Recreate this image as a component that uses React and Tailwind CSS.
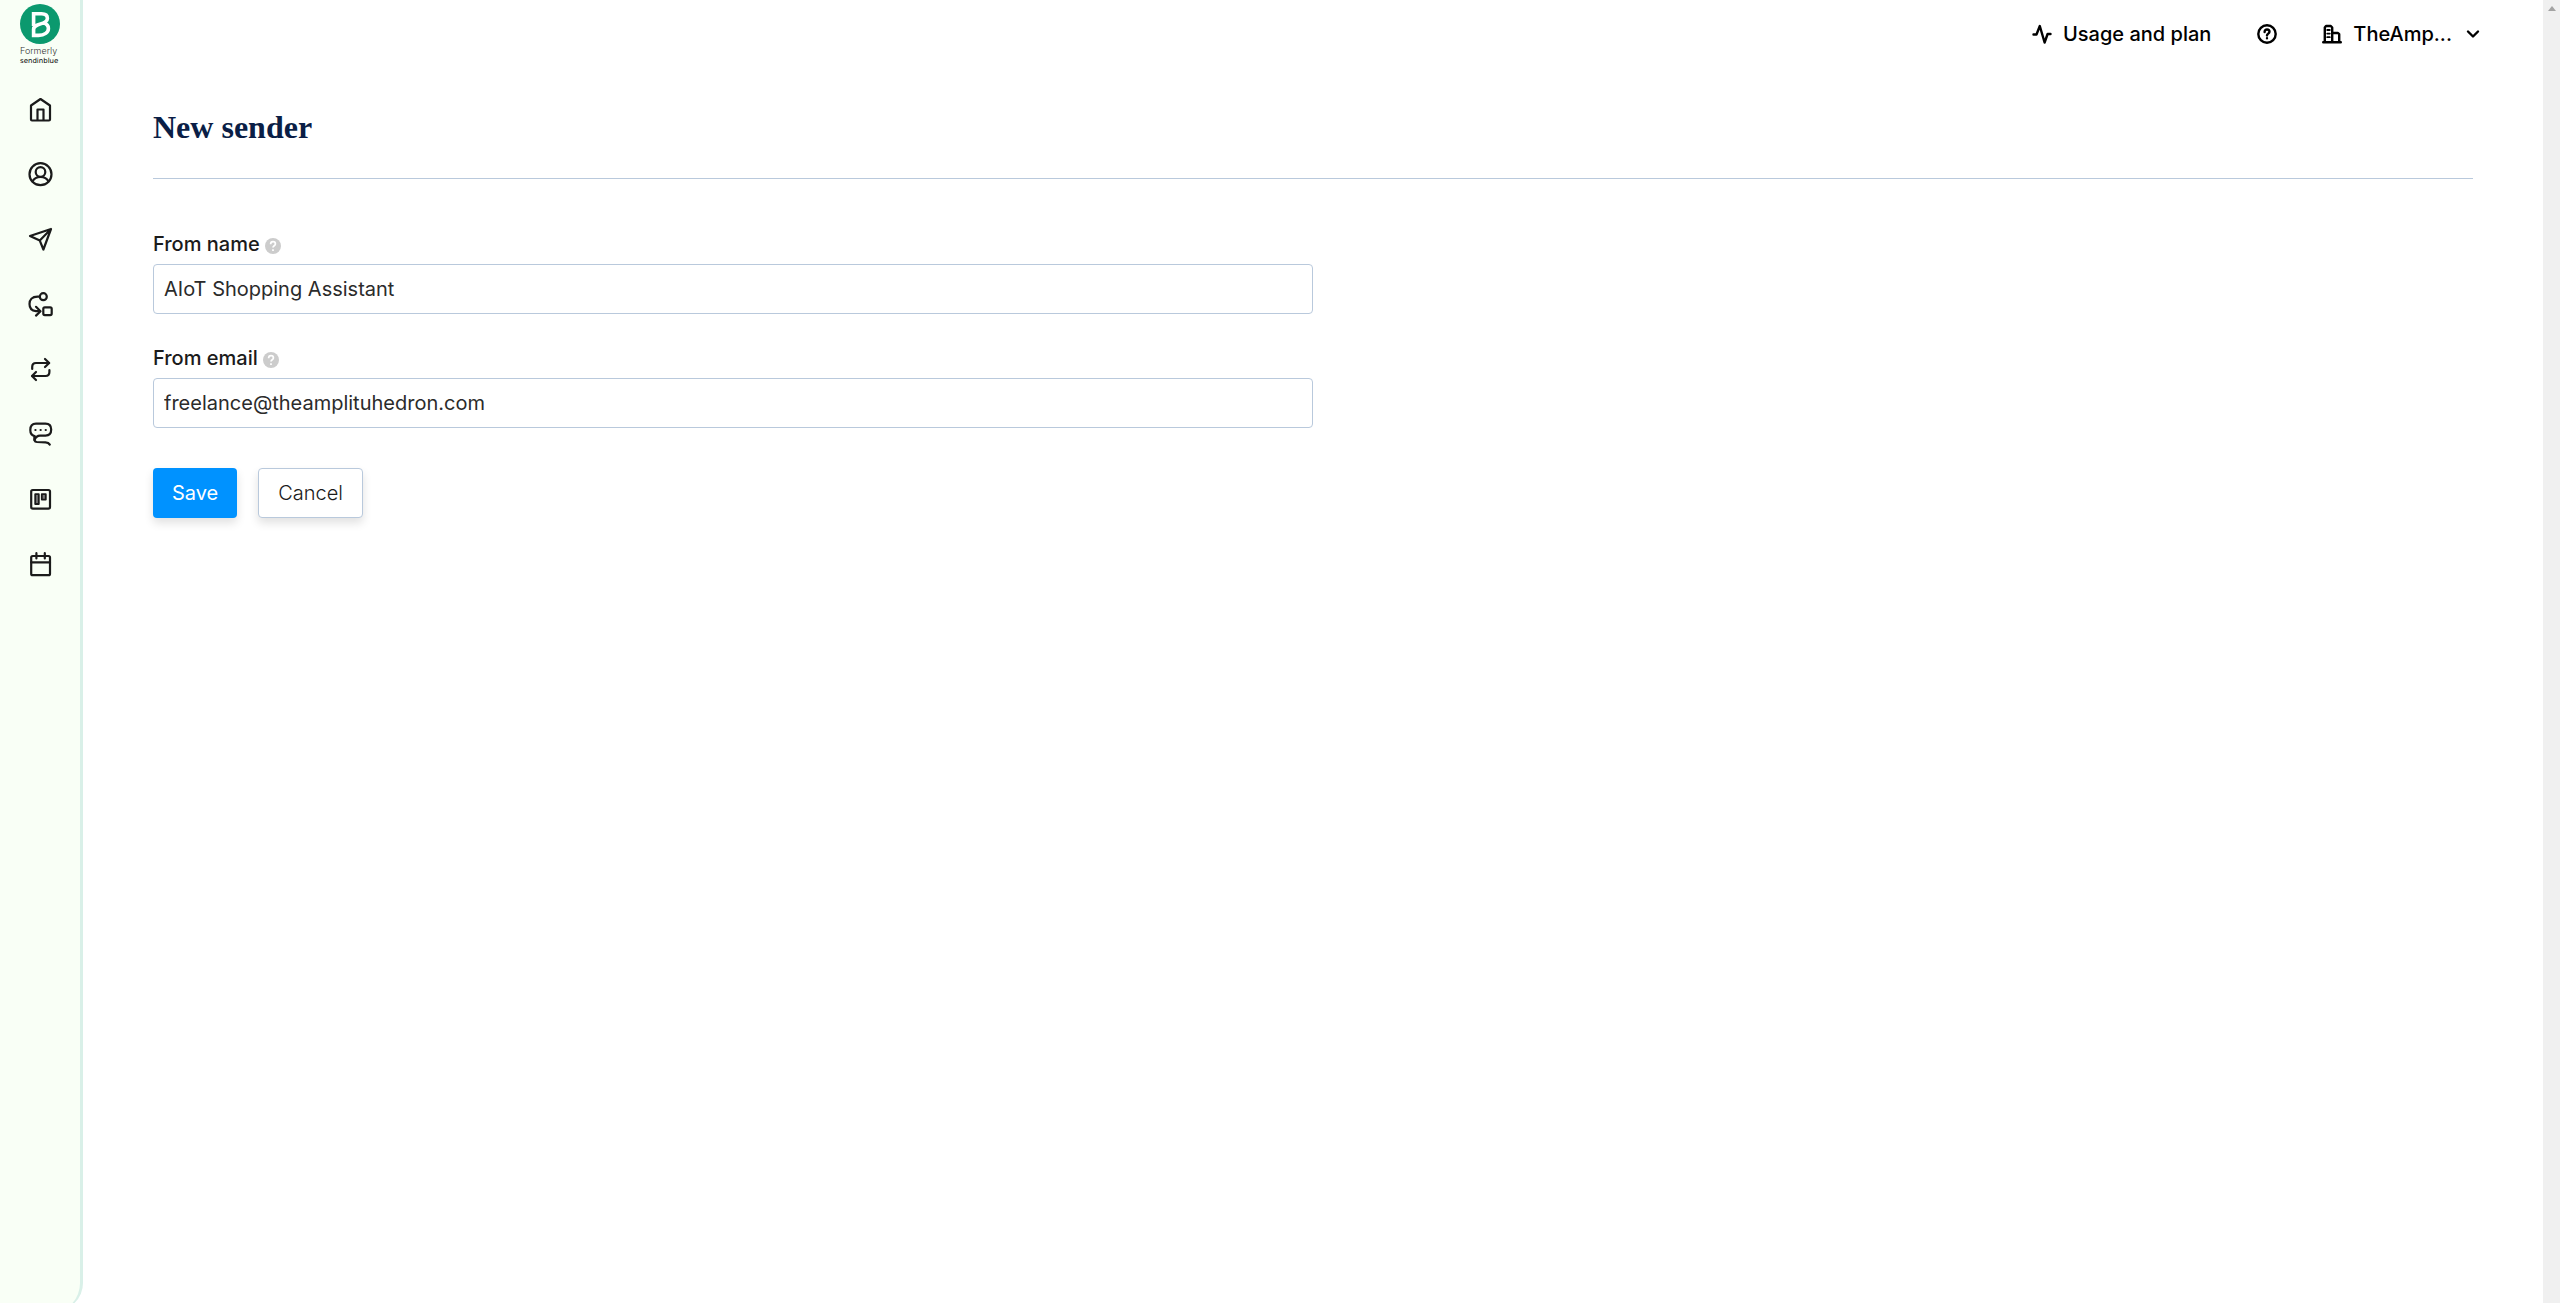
import React from 'react';

const navItems = [
  {
    label: 'Home',
    icon: (
      <>
        <path d="M4 23.5 C3.3 23.5 3 23 3 22.5 V8.5 L12.5 2 L22 8.5 V22.5 C22 23 21.7 23.5 21 23.5 Z" />
        <path d="M9.5 23 V12.5 H15.5 V23" />
      </>
    ),
  },
  {
    label: 'Contacts',
    icon: (
      <>
        <circle cx="12.5" cy="12.2" r="11" />
        <circle cx="12.5" cy="10" r="4.8" />
        <path d="M4.5 19.5 C6 16.5 9 15 12.5 15 S19 16.5 20.5 19.5" />
      </>
    ),
  },
  {
    label: 'Campaigns',
    icon: <path d="M23 2 L2 9 L11.8 13.6 L15.4 22.5 Z M23 2 L11.8 13.6" />,
  },
  {
    label: 'Automation',
    icon: (
      <>
        <circle cx="15.3" cy="4.7" r="3.5" />
        <path d="M11.5 4.7 H9.5 C4 4.7 1.5 8 1.5 12 S4 18.8 8 19.2 H12" />
        <path d="M8 14.8 L12.5 19.2 L8 23.6" />
        <rect x="15.3" y="15.3" width="8.4" height="7.8" rx="1.5" />
      </>
    ),
  },
  {
    label: 'Transactional',
    icon: (
      <>
        <path d="M4.2 12 V10 C4.2 7.5 5.5 6 8 6 H21" />
        <path d="M17 2 L21.2 6 L17 10" />
        <path d="M21.4 13 V15 C21.4 17.5 20 19 17.6 19 H4.5" />
        <path d="M8 15 L4 19 L8 23" />
      </>
    ),
  },
  {
    label: 'Conversations',
    icon: (
      <>
        <path d="M6.5 14 C3.5 13.4 2.3 11 2.3 8 C2.3 3.5 4 1.6 8 1.6 H17.5 C21.5 1.6 23.2 3.5 23.2 7.6 S21.5 13.6 17.5 13.6 H12 C9.5 13.6 7.5 15.5 6.5 18" />
        <path d="M6.4 14 C6.2 17.5 6 19.8 9 20 L17.5 20.3 C19.5 20.4 21 21.2 21.8 22.6" />
        <path d="M7.4 8 H7.5 M12.6 8 H12.7 M17.7 8 H17.8" />
      </>
    ),
  },
  {
    label: 'Deals',
    icon: (
      <>
        <rect x="3.2" y="3" width="18.8" height="18.6" rx="1.5" />
        <rect x="7.2" y="7.2" width="3.6" height="9.8" strokeWidth="1.8" fill="#777" />
        <rect x="13.8" y="7.2" width="4" height="5.4" strokeWidth="1.8" fill="#777" />
      </>
    ),
  },
  {
    label: 'Meetings',
    icon: (
      <>
        <rect x="3.2" y="4" width="18.8" height="19.2" rx="1.5" />
        <path d="M3.2 10.4 H22 M8.4 1.2 V6.4 M16.8 1.2 V6.4" />
      </>
    ),
  },
];

function Logo() {
  return (
    <a href="#home" className="mx-auto flex w-10 flex-col items-start">
      <svg viewBox="0 0 40 40" className="h-10 w-10" aria-label="Brevo">
        <circle cx="20" cy="20" r="20" fill="#0b996e" />
        <path
          d="M13.6 22 V9.8 H21.5 C25.2 9.8 27.4 11.6 27.4 14.4 C27.4 21.2 13.6 18.6 13.6 25.6 V31.4 H18.5 C24.5 31.4 28.4 28.4 28.4 24.4 C28.4 21.8 26.6 19.8 23.8 19"
          fill="none"
          stroke="#fff"
          strokeWidth="3.6"
        />
      </svg>
      <span className="text-[9px] leading-[13px] font-light text-[#333]">Formerly</span>
      <span className="font-['DejaVu_Sans',sans-serif] text-[7px] leading-[8px] text-black">sendinblue</span>
    </a>
  );
}

function Sidebar() {
  return (
    <aside className="-mb-2 w-[83px] shrink-0 rounded-br-[28px] border-r-3 border-[#d9f0e8] bg-[#f9fff6] pt-1">
      <Logo />
      <nav className="mt-8 flex flex-col items-center gap-[39px]">
        {navItems.map(item => (
          <a key={item.label} href={'#' + item.label.toLowerCase()} aria-label={item.label}>
            <svg
              viewBox="-1 0 26 26"
              className="block h-[26px] w-[26px]"
              fill="none"
              stroke="#1b1b1b"
              strokeWidth="2.2"
              strokeLinecap="round"
              strokeLinejoin="round"
            >
              {item.icon}
            </svg>
          </a>
        ))}
      </nav>
    </aside>
  );
}

function HeaderIcon({ children }) {
  return (
    <svg
      viewBox="0 0 20 20"
      className="h-5 w-5 shrink-0"
      fill="none"
      stroke="#000"
      strokeWidth="2.4"
      strokeLinecap="round"
      strokeLinejoin="round"
    >
      {children}
    </svg>
  );
}

function Header() {
  return (
    <header className="flex h-[68px] items-center justify-end pr-[60px] text-[20px] font-medium text-black">
      <button className="flex items-center gap-[11px]">
        <HeaderIcon>
          <path d="M1.5 10.5 H4.5 L7.8 2 L12.6 18.5 L15.6 10 H18.5" />
        </HeaderIcon>
        Usage and plan
      </button>
      <button className="ml-[46px]" aria-label="Help">
        <HeaderIcon>
          <circle cx="10" cy="10" r="8.7" />
          <path d="M7.6 8 C7.6 6.4 8.6 5.5 10 5.5 S12.5 6.4 12.5 7.8 C12.5 9.6 10 9.6 10 11.4 M10 14.2 V14.3" />
        </HeaderIcon>
      </button>
      <button className="ml-[45px] flex items-center gap-[11px]">
        <HeaderIcon>
          <path d="M1.2 18.2 H18.8 M2.8 18 V3.5 L4 2 H8.8 L10.2 3.5 V18 M10.2 9 H16 L17.2 10.2 V18" />
          <path d="M5.2 6 H7.8 M5.2 9.6 H7.8 M5.2 13.2 H7.8" strokeWidth="1.8" />
        </HeaderIcon>
        TheAmp...
        <HeaderIcon>
          <path d="M5 7.5 L10 12.5 L15 7.5" />
        </HeaderIcon>
      </button>
    </header>
  );
}

function Field({ id, label, type, value }) {
  return (
    <div>
      <div className="flex h-7 items-center gap-[5px]">
        <label htmlFor={id} className="text-[20px] leading-7 font-medium">
          {label}
        </label>
        <svg viewBox="0 0 16 16" className="mt-1 h-4 w-4" aria-hidden="true">
          <circle cx="8" cy="8" r="8" fill="#ccc" />
          <path
            d="M5.6 6.2 C5.6 4.6 6.6 3.7 8 3.7 S10.4 4.6 10.4 6 C10.4 7.8 8 7.8 8 9.6 M8 11.2 V13"
            fill="none"
            stroke="#fff"
            strokeWidth="1.7"
          />
        </svg>
      </div>
      <input
        id={id}
        type={type}
        defaultValue={value}
        className="mt-[6px] h-[50px] w-full rounded-[4px] border border-[#b9c9dc] bg-white px-[10px] text-[20px] font-normal text-[#2b2b2b] outline-none"
      />
    </div>
  );
}

export default function App() {
  return (
    <div className="flex min-h-screen overflow-hidden bg-white font-['Inter',sans-serif] text-[#1b1b1b]">
      <Sidebar />
      <div className="min-w-0 flex-1">
        <Header />
        <main className="px-[70px] pt-[39px]">
          <h1 className="border-b border-[#b9c9dc] pb-[31px] font-['Liberation_Serif',serif] text-[32px] leading-10 font-bold text-[#0a1e46]">
            New sender
          </h1>
          <form className="mt-[51px] w-1/2" onSubmit={e => e.preventDefault()}>
            <div className="flex flex-col gap-[30px]">
              <Field id="from-name" label="From name" type="text" value="AIoT Shopping Assistant" />
              <Field id="from-email" label="From email" type="email" value="freelance@theamplituhedron.com" />
            </div>
            <div className="mt-10 flex gap-[21px] text-[20px]">
              <button
                type="submit"
                className="h-[50px] rounded-[4px] bg-[#0092ff] px-[19px] text-white shadow-[0_5px_10px_rgba(0,0,0,0.12)]"
              >
                Save
              </button>
              <button
                type="button"
                className="h-[50px] rounded-[4px] border border-[#b9c9dc] bg-white px-[19px] font-light text-[#1b1b1b] shadow-[0_5px_10px_rgba(0,0,0,0.12)]"
              >
                Cancel
              </button>
            </div>
          </form>
        </main>
      </div>
      {/* Scroll track */}
      <div className="flex w-[17px] shrink-0 justify-center bg-[#f0f0f0] pt-[6px]">
        <svg viewBox="0 0 8 5" className="h-[5px] w-2">
          <path d="M4 0 L8 5 H0 Z" fill="#a3a3a3" />
        </svg>
      </div>
    </div>
  );
}
